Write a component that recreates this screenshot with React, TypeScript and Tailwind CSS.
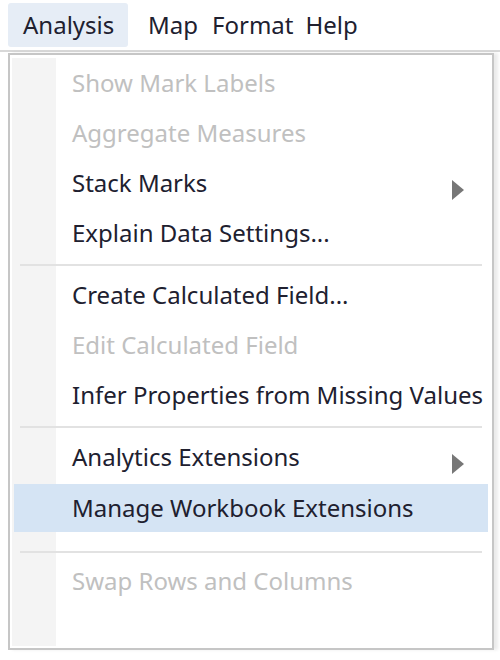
import { ReactNode } from "react";

// ── Menu data ─────────────────────────────────────────────────

type Entry =
  | { kind: "item"; label: string; disabled?: boolean; submenu?: boolean; active?: boolean }
  | { kind: "sep"; top: number; bottom: number };

const ENTRIES: Entry[] = [
  { kind: "item", label: "Show Mark Labels", disabled: true },
  { kind: "item", label: "Aggregate Measures", disabled: true },
  { kind: "item", label: "Stack Marks", submenu: true },
  { kind: "item", label: "Explain Data Settings..." },
  { kind: "sep", top: 6, bottom: 4 },
  { kind: "item", label: "Create Calculated Field..." },
  { kind: "item", label: "Edit Calculated Field", disabled: true },
  { kind: "item", label: "Infer Properties from Missing Values" },
  { kind: "sep", top: 6, bottom: 4 },
  { kind: "item", label: "Analytics Extensions", submenu: true },
  { kind: "item", label: "Manage Workbook Extensions", active: true },
  { kind: "sep", top: 19, bottom: 3 },
  { kind: "item", label: "Swap Rows and Columns", disabled: true },
];

const FONT = "font-['Noto_Sans',sans-serif]";

function Arrow() {
  return (
    <svg width="12" height="20" viewBox="0 0 12 20" className="absolute right-[26px] top-[22px]">
      <path d="M0 0 L12 10 L0 20 Z" fill="#777777" />
    </svg>
  );
}

function Row({ children, className }: { children: ReactNode; className: string }) {
  return <div className={`relative flex items-center ${className}`}>{children}</div>;
}

// ── Component ─────────────────────────────────────────────────

export default function App() {
  return (
    <div className={`w-[500px] h-[660px] bg-white overflow-hidden ${FONT} text-[24px] text-[#20202f]`}>
      {/* menu bar */}
      <div className="flex items-center h-[52px] pt-[4px] pb-[4px] border-b-2 border-[#d8d8d8]">
        <div className="ml-[8px] w-[120px] h-[44px] rounded-[3px] bg-[#e6edf6] flex items-center pl-[15px]">
          Analysis
        </div>
        <span className="ml-[20px]">Map</span>
        <span className="ml-[14px]">Format</span>
        <span className="ml-[12px]">Help</span>
      </div>

      {/* dropdown */}
      <div className="ml-[8px] mt-[1px] w-[486px] h-[597px] border-2 border-[#c6c6c6] pt-[3px] pb-[2px] px-[2px] shadow-[4px_0_3px_rgba(0,0,0,0.08)]">
        <div className="h-full bg-[linear-gradient(to_right,#f4f4f4_44px,#ffffff_44px)]">
          {ENTRIES.map((e, i) =>
            e.kind === "sep" ? (
              <div key={i} style={{ paddingTop: e.top, paddingBottom: e.bottom }} className="px-[8px]">
                <div className="h-[2px] bg-[#e2e2e2]" />
              </div>
            ) : e.active ? (
              <Row key={i} className="h-[48px] mt-[2px] mx-[2px] pl-[58px] bg-[#d5e4f4]">
                <span className="whitespace-nowrap">{e.label}</span>
              </Row>
            ) : (
              <Row key={i} className="h-[50px] pl-[60px]">
                <span className={`whitespace-nowrap ${e.disabled ? "text-[#c0c0c0]" : ""}`}>{e.label}</span>
                {e.submenu && <Arrow />}
              </Row>
            )
          )}
        </div>
      </div>
    </div>
  );
}
